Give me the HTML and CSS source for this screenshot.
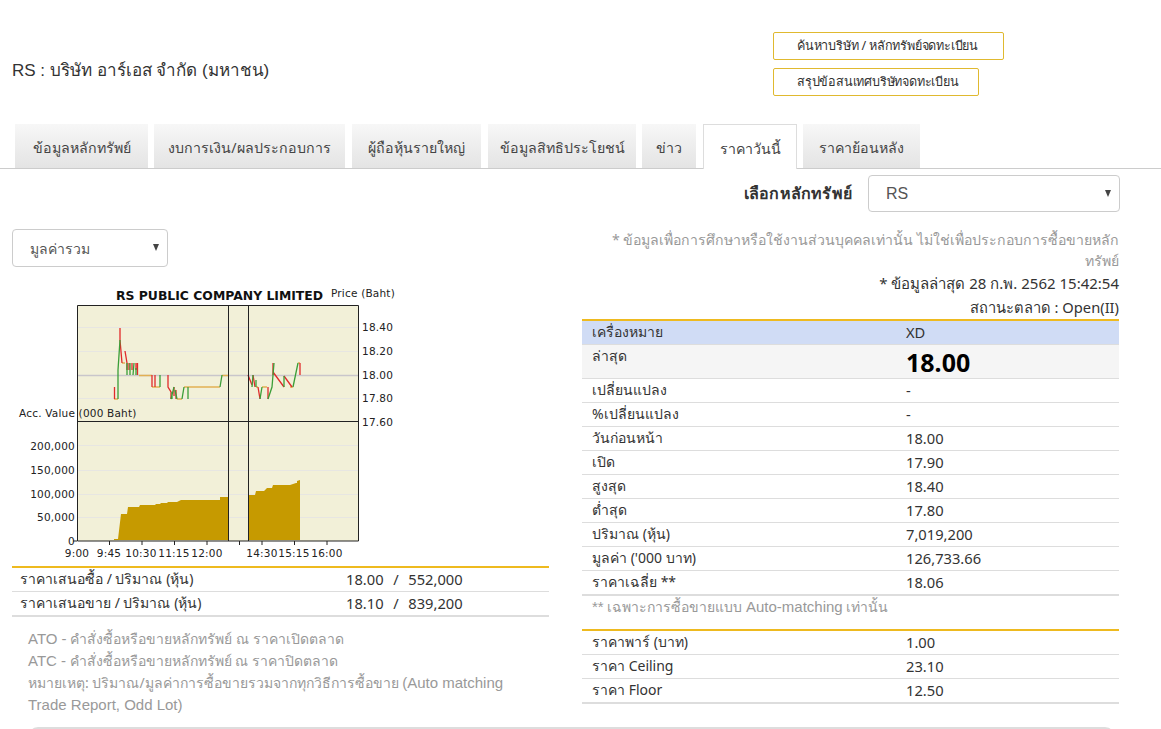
FILE: index.html
```html
<!DOCTYPE html>
<html lang="th">
<head>
<meta charset="utf-8">
<title>RS</title>
<link rel="stylesheet" href="styles.css">
</head>
<body>
<header class="top">
  <h1 class="title">RS : บริษัท อาร์เอส จำกัด (มหาชน)</h1>
  <div class="links">
    <a class="link-btn link-wide">ค้นหาบริษัท / หลักทรัพย์จดทะเบียน</a>
    <a class="link-btn link-narrow">สรุปข้อสนเทศบริษัทจดทะเบียน</a>
  </div>
</header>
<nav class="tabs">
  <a class="tab t1">ข้อมูลหลักทรัพย์</a>
  <a class="tab t2">งบการเงิน/ผลประกอบการ</a>
  <a class="tab t3">ผู้ถือหุ้นรายใหญ่</a>
  <a class="tab t4">ข้อมูลสิทธิประโยชน์</a>
  <a class="tab t5">ข่าว</a>
  <a class="tab t6 active">ราคาวันนี้</a>
  <a class="tab t7">ราคาย้อนหลัง</a>
</nav>
<div class="picker">
  <label class="picker-label">เลือกหลักทรัพย์</label>
  <span class="select-wrap wrap-stock"><select class="select select-stock"><option>RS</option></select></span>
</div>
<main class="columns">
  <section class="left">
    <span class="select-wrap wrap-mode"><select class="select select-mode"><option>มูลค่ารวม</option></select></span>
    <svg class="chart" width="537" height="281" viewBox="12 285 537 281" xmlns="http://www.w3.org/2000/svg">
      <rect x="77" y="305" width="281" height="236" fill="#f2f0d8"/>
      <path d="M77 327.500H358M77 351.500H358M77 398.500H358M77 445.500H358M77 470.500H358M77 494.500H358M77 517.500H358" stroke="#e7e6e2" stroke-width="1" fill="none"/>
      <path d="M77 375.500H358" stroke="#c9c6cb" stroke-width="1.500" fill="none"/>
      <path d="M114 540V539H118L121 514H127L128 507H139L140 505H155L156 504H160L161 503H167L168 502H177L181 500H220V497H228V540Z" fill="#c69a00"/>
      <path d="M249 540V495H255L256 491H264L267 488H272L273 485H290L296 483H297V481L300 480V540Z" fill="#c69a00"/>
      <g fill="none" stroke-width="1.300">
        <path d="M114 399H118M122 363H125M139 375.500H152M152 387H160M177 399H182M184 387H188M188 387H220M222 375.500H228M256 387H258M262 387H267M290 387H293M298 363H300" stroke="#e2b053"/>
        <path d="M114.500 387V399M120 328V340L122 363M125 351L127 363V370M129 363V370M132 363V370M136 363V370M137.500 363V375M152 375V387M155 375V387M168 375V387L171 392V399M174 387V396M176 390V399M248 375L252 385M253 375L255 387M258 387L260 399M268 387L268 399M273 363V375M273 372L284 387M284 376L292 387M300 363V375" stroke="#e02a2a"/>
        <path d="M118 399V370L120 340M127 375V363M130 375V363M133 375L134 363M136 375V368M160 375V387M171 399L174 387M172 399V392M177 399L175 390M182 399L184 387M188 399V387M220 387L222 375M252 387L253 375M256 387V380M260 399L262 387M268 399L272 387L273 375L274 363M284 387V376M293 387L298 363" stroke="#3a9e38"/>
      </g>
      <path d="M77.500 305.500H358.500V541H77.500ZM77 421.500H358M228.500 305V541M248.500 305V541M109.500 541V545M142 541V545M174.500 541V545M207 541V545M239.500 541V545M262 541V545M294.500 541V545M327 541V545" fill="none" stroke="#222" stroke-width="1"/>
      <path d="M73 541H77" stroke="#222"/>
      <text class="c-title" x="116" y="300">RS PUBLIC COMPANY LIMITED</text>
      <text class="c-text" x="331" y="297">Price (Baht)</text>
      <text class="c-text" x="19" y="417">Acc. Value (000 Baht)</text>
      <text class="c-text" x="362" y="331">18.40</text>
      <text class="c-text" x="362" y="355">18.20</text>
      <text class="c-text" x="362" y="379">18.00</text>
      <text class="c-text" x="362" y="402">17.80</text>
      <text class="c-text" x="362" y="426">17.60</text>
      <text class="c-text c-end" x="75" y="450">200,000</text>
      <text class="c-text c-end" x="75" y="474">150,000</text>
      <text class="c-text c-end" x="75" y="498">100,000</text>
      <text class="c-text c-end" x="75" y="521">50,000</text>
      <text class="c-text c-end" x="75" y="545">0</text>
      <text class="c-text c-mid" x="77" y="557">9:00</text>
      <text class="c-text c-mid" x="109" y="557">9:45</text>
      <text class="c-text c-mid" x="141" y="557">10:30</text>
      <text class="c-text c-mid" x="174" y="557">11:15</text>
      <text class="c-text c-mid" x="207" y="557">12:00</text>
      <text class="c-text c-mid" x="262" y="557">14:30</text>
      <text class="c-text c-mid" x="294" y="557">15:15</text>
      <text class="c-text c-mid" x="327" y="557">16:00</text>
    </svg>
    <table class="data bid">
      <tr><td class="k">ราคาเสนอซื้อ / ปริมาณ (หุ้น)</td><td class="v wide">18.00&nbsp; /&nbsp; 552,000</td></tr>
      <tr><td class="k">ราคาเสนอขาย / ปริมาณ (หุ้น)</td><td class="v wide">18.10&nbsp; /&nbsp; 839,200</td></tr>
    </table>
    <div class="notes">
      <p><span class="en">ATO -</span> คำสั่งซื้อหรือขายหลักทรัพย์ ณ ราคาเปิดตลาด</p>
      <p><span class="en">ATC -</span> คำสั่งซื้อหรือขายหลักทรัพย์ ณ ราคาปิดตลาด</p>
      <p>หมายเหตุ: ปริมาณ/มูลค่าการซื้อขายรวมจากทุกวิธีการซื้อขาย <span class="en">(Auto matching</span> <span class="en">Trade Report, Odd Lot)</span></p>
    </div>
  </section>
  <section class="right">
    <p class="disclaimer">* ข้อมูลเพื่อการศึกษาหรือใช้งานส่วนบุคคลเท่านั้น ไม่ใช่เพื่อประกอบการซื้อขายหลักทรัพย์</p>
    <p class="status status-date">* ข้อมูลล่าสุด 28 ก.พ. 2562 15:42:54</p>
    <p class="status">สถานะตลาด : Open(II)</p>
    <table class="data quote">
      <tr class="row-sign"><td class="k">เครื่องหมาย</td><td class="v">XD</td></tr>
      <tr class="row-last"><td class="k">ล่าสุด</td><td class="big">18.00</td></tr>
      <tr><td class="k">เปลี่ยนแปลง</td><td class="v">-</td></tr>
      <tr><td class="k">%เปลี่ยนแปลง</td><td class="v">-</td></tr>
      <tr><td class="k">วันก่อนหน้า</td><td class="v">18.00</td></tr>
      <tr><td class="k">เปิด</td><td class="v">17.90</td></tr>
      <tr><td class="k">สูงสุด</td><td class="v">18.40</td></tr>
      <tr><td class="k">ต่ำสุด</td><td class="v">17.80</td></tr>
      <tr><td class="k">ปริมาณ (หุ้น)</td><td class="v">7,019,200</td></tr>
      <tr><td class="k">มูลค่า ('000 บาท)</td><td class="v">126,733.66</td></tr>
      <tr><td class="k">ราคาเฉลี่ย **</td><td class="v">18.06</td></tr>
    </table>
    <p class="auto-note"><span class="en">**</span> เฉพาะการซื้อขายแบบ <span class="en">Auto-matching</span> เท่านั้น</p>
    <table class="data quote par">
      <tr><td class="k">ราคาพาร์ (บาท)</td><td class="v">1.00</td></tr>
      <tr><td class="k">ราคา Ceiling</td><td class="v">23.10</td></tr>
      <tr><td class="k">ราคา Floor</td><td class="v">12.50</td></tr>
    </table>
  </section>
</main>
<div class="panel-edge"></div>
</body>
</html>
```
FILE: styles.css
```css
* { box-sizing: border-box; }
html, body { margin: 0; padding: 0; background: #fff; overflow: hidden; }
body { height: 729px; font-family: "Noto Sans", "Liberation Sans", sans-serif; color: #333; font-size: 14px; }
p { margin: 0; }
.en { font-family: "Liberation Sans", sans-serif; font-size: 15px; }

.top { display: flex; height: 124px; padding: 32px 0 0 12px; }
.title { margin: 25px 0 0; width: 761px; font-family: "Liberation Sans", "Noto Sans", sans-serif; font-size: 17px; line-height: 28px; font-weight: 400; color: #333; }
.links { display: flex; flex-direction: column; gap: 8px; align-items: flex-start; }
.link-btn { display: block; height: 28px; line-height: 25px; padding-left: 23px; border: 1px solid #e0b92f; border-radius: 2px; font-size: 12.6px; letter-spacing: -.2px; color: #333; }
.link-wide { width: 231px; }
.link-narrow { width: 206px; }

.tabs { display: flex; height: 45px; padding-left: 15px; gap: 6px; border-bottom: 1px solid #ccc; }
.tab { display: block; height: 44px; line-height: 48px; text-align: center; font-size: 14.2px; color: #444; background: linear-gradient(#f7f7f7, #e4e4e4); }
.t1 { width: 133px; }
.t2 { width: 191px; }
.t3 { width: 129px; margin-left: 1px; }
.t4 { width: 148px; margin-left: 1px; }
.t5 { width: 54px; }
.t6 { width: 94px; margin-left: 1px; }
.t7 { width: 117px; }
.active { height: 45px; background: #fff; border: 1px solid #ddd; border-bottom: 0; }

.picker { display: flex; justify-content: flex-end; align-items: center; gap: 16px; height: 37px; margin: 6px 41px 0 0; }
.picker-label { font-weight: 700; font-size: 16px; letter-spacing: .2px; color: #333; }
.select-wrap { display: block; position: relative; }
.select-wrap::after { content: ""; position: absolute; top: 50%; margin-top: -4px; border-style: solid; border-width: 7px 3.5px 0; border-color: #444 transparent transparent; pointer-events: none; }
.wrap-stock { width: 252px; }
.wrap-stock::after { right: 9px; }
.wrap-mode { width: 156px; }
.wrap-mode::after { right: 9px; }
.select { display: block; width: 100%; height: 38px; padding: 0 17px; border: 1px solid #ccc; border-radius: 4px; appearance: none; background-color: #fff; font: inherit; font-size: 14px; color: #555; }
.select-stock { height: 37px; font-family: "Liberation Sans", sans-serif; font-size: 16px; }

.columns { display: grid; grid-template-columns: 537px 537px; column-gap: 33px; padding: 17px 0 0 12px; }
.chart { display: block; margin-top: 18px; }

.data { width: 100%; border-collapse: collapse; color: #333; font-size: 14px; }
.data td { height: 24px; padding: 0 0 0 10px; border-bottom: 1px solid #ddd; line-height: 20px; }
.data .v { font-size: 14.7px; }
.data .wide { word-spacing: 1px; }
.data tr:last-child td { height: 25px; border-bottom: 2px solid #ddd; }
.bid { border-top: 2px solid #eeba1f; }
.bid .k { width: 324px; padding-left: 8px; }
.quote { border-top: 2px solid #eeba1f; }
.quote .k { width: 314px; }
.row-sign td { background: #d0dcf5; }
.row-last td { height: 34px; background: #f5f5f5; vertical-align: top; padding-top: 1px; }
.data .big { font-size: 25px; font-weight: 700; line-height: 32px; color: #000; padding-top: 1px; }

.notes { padding: 11px 40px 0 16px; font-size: 14px; line-height: 22px; color: #999; }
.disclaimer { padding-left: 22px; text-align: right; font-size: 14.1px; line-height: 21px; color: #999; }
.status { text-align: right; font-size: 14.7px; line-height: 24px; color: #333; }
.status-date { font-size: 15px; }
.auto-note { height: 33px; padding: 0 0 0 10px; line-height: 22px; color: #999; }
.panel-edge { position: absolute; left: 28px; top: 727px; width: 1087px; height: 10px; border: 2px solid #ddd; border-radius: 10px 10px 0 0; }

.c-title { font: 700 12.4px "DejaVu Sans", sans-serif; fill: #111; }
.c-text { font: 10.5px "DejaVu Sans", sans-serif; fill: #222; letter-spacing: .2px; }
.c-end { text-anchor: end; }
.c-mid { text-anchor: middle; }
```
